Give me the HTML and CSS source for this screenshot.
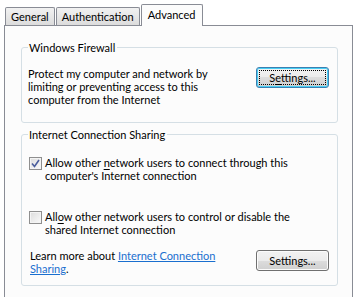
FILE: index.html
```html
<!DOCTYPE html>
<html lang="en">
<head>
    <meta charset="UTF-8">
    <title>Properties - Advanced</title>
    <link rel="stylesheet" href="styles.css">
</head>
<body>
    <div class="tabs">
        <div class="tab">General</div>
        <div class="tab">Authentication</div>
        <div class="tab active">Advanced</div>
    </div>

    <div class="panel">
        <fieldset class="group firewall">
            <legend>Windows Firewall</legend>
            <div class="row">
                <p class="desc">Protect my computer and network by<br>limiting or preventing access to this<br>computer from the Internet</p>
                <button class="btn focused"><span class="focus-rect">S<u>e</u>ttings...</span></button>
            </div>
        </fieldset>

        <fieldset class="group sharing">
            <legend>Internet Connection Sharing</legend>
            <label class="check first">
                <span class="box">
                    <svg width="9" height="9" viewBox="0 0 9 9"><path d="M1 4.5 L3.5 7.5 L8 1" fill="none" stroke="#4a5d9c" stroke-width="1.6"/></svg>
                </span>
                <span>Allow other <u>n</u>etwork users to connect through this<br>computer's Internet connection</span>
            </label>
            <label class="check second">
                <span class="box"></span>
                <span>All<u>o</u>w other network users to control or disable the<br>shared Internet connection</span>
            </label>
            <div class="row learn">
                <p>Learn more about <a href="#">Internet Connection<br>Sharing</a>.</p>
                <button class="btn">Settings...</button>
            </div>
        </fieldset>
    </div>
</body>
</html>
```

FILE: styles.css
```css
body {
    margin: 0;
    background: #ffffff;
    font-family: Lato, "Noto Sans", sans-serif;
    font-size: 11px;
    line-height: 13px;
    color: #000000;
    overflow: hidden;
}

/* tab strip */
.tabs {
    display: flex;
    align-items: flex-end;
    height: 25px;
    padding-left: 5px;
}

.tab {
    height: 17px;
    padding: 0 5px;
    margin-right: 1px;
    border: 1px solid #898c95;
    border-bottom: none;
    border-radius: 2px 2px 0 0;
    background: linear-gradient(#f2f2f2, #dcdcdc);
    line-height: 18px;
    white-space: nowrap;
}

.tab.active {
    position: relative;
    height: 21px;
    margin-bottom: -1px;
    padding: 0 7px 0 6px;
    background: #fcfcfc;
    line-height: 19px;
}

/* page of the dialog */
.panel {
    box-sizing: border-box;
    margin: 0 4px;
    height: 272px;
    border: 1px solid #898c95;
    border-bottom: none;
    background: #fcfcfc;
    padding: 14px 14px 0 16px;
}

.group {
    margin: 0;
    padding: 0 8px 0 6px;
    border: 1px solid #d5dfe5;
    border-radius: 3px;
}

.group legend {
    padding: 0 2px 0 1px;
    margin-left: 0;
    line-height: 15px;
}

.firewall {
    padding-top: 12px;
    padding-bottom: 16px;
    margin-bottom: 4px;
}

.row {
    display: flex;
    justify-content: space-between;
    align-items: flex-start;
}

p {
    margin: 0;
    white-space: nowrap;
}

.btn {
    width: 73px;
    height: 21px;
    padding: 0;
    border: 1px solid #707070;
    border-radius: 3px;
    background: linear-gradient(#f2f2f2 0%, #ebebeb 50%, #dddddd 50%, #cfcfcf 100%);
    box-shadow: inset 0 0 0 1px #fbfbfb;
    font: inherit;
    color: #000000;
}

.btn.focused {
    border-color: #3c7fb1;
    box-shadow: inset 0 0 0 1px #48cff5;
}

.focus-rect {
    display: inline-block;
    padding: 0 9px;
    line-height: 13px;
    outline: 1px dotted #000000;
}

u {
    text-decoration-thickness: 1px;
    text-underline-offset: 2px;
}

/* check boxes */
.check {
    display: flex;
    align-items: flex-start;
    gap: 3px;
    margin-left: 1px;
    white-space: nowrap;
}

.check.first {
    margin-top: 14px;
}

.check.second {
    margin-top: 28px;
}

.box {
    flex: none;
    width: 11px;
    height: 11px;
    margin-top: 1px;
    border: 1px solid #8f8f8f;
    background: linear-gradient(135deg, #dcdcdc, #fafafa);
    box-shadow: inset 0 0 0 1px #f4f4f4;
    display: flex;
    align-items: center;
    justify-content: center;
}

.learn {
    margin-top: 13px;
    padding-bottom: 10px;
    padding-left: 2px;
}

.learn .btn {
    margin-top: 1px;
}

a {
    color: #1a6fcf;
}
```
